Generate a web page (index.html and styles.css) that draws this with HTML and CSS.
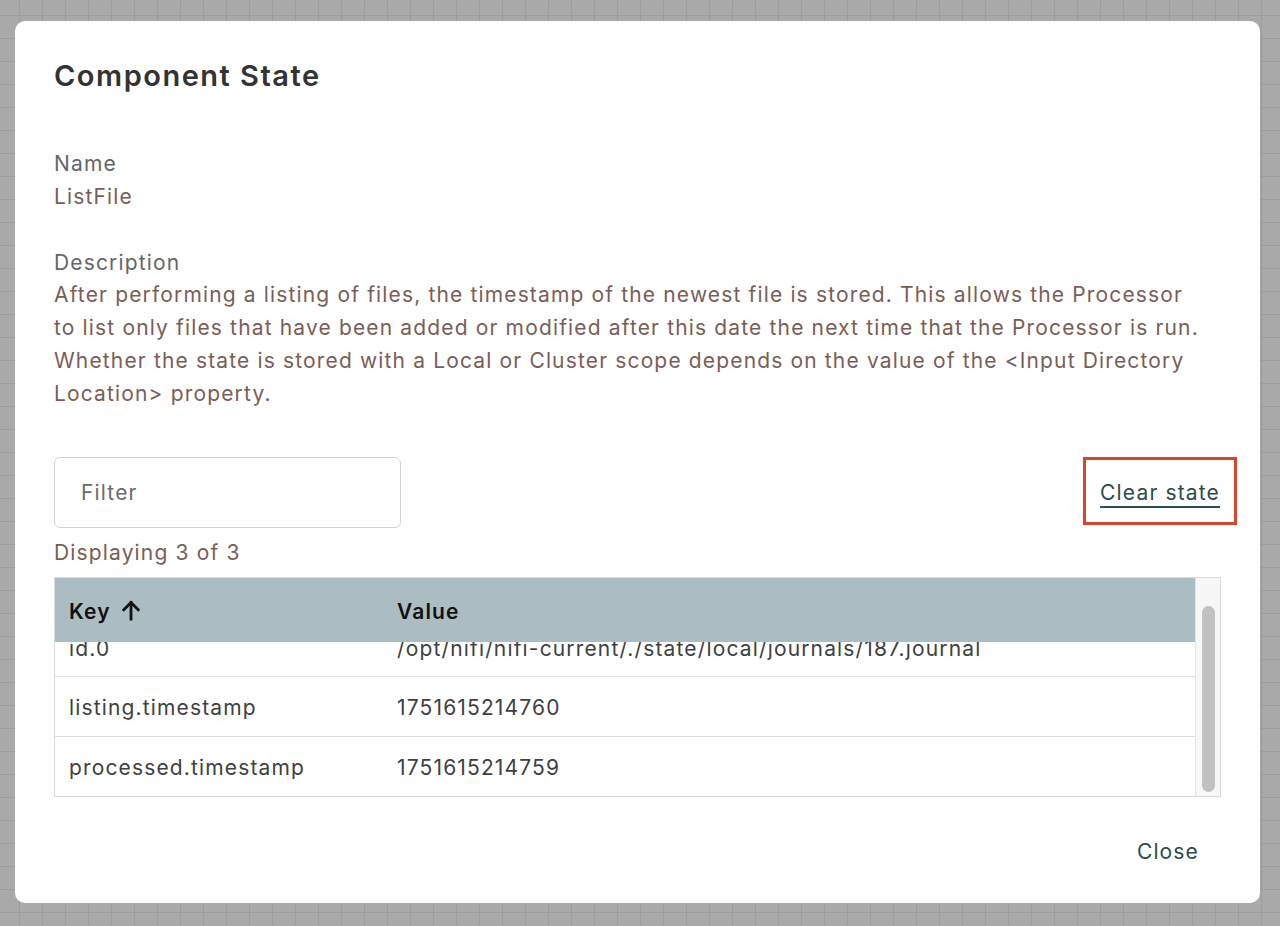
FILE: index.html
```html
<!DOCTYPE html>
<html>
<head>
<meta charset="utf-8">
<link rel="stylesheet" href="styles.css">
</head>
<body>
<div class="backdrop">
  <div class="dialog">
    <h1 class="title">Component State</h1>
    <div class="field">
      <div class="label">Name</div>
      <div class="value">ListFile</div>
    </div>
    <div class="field desc">
      <div class="label">Description</div>
      <div class="value">After performing a listing of files, the timestamp of the newest file is stored. This allows the Processor<br>to list only files that have been added or modified after this date the next time that the Processor is run.<br>Whether the state is stored with a Local or Cluster scope depends on the value of the &lt;Input Directory<br>Location&gt; property.</div>
    </div>
    <div class="toolbar">
      <div class="filter">Filter</div>
      <div class="clear-wrap">
        <a class="clear">Clear state</a>
        <div class="highlight"></div>
      </div>
    </div>
    <div class="count">Displaying 3 of 3</div>
    <div class="table">
      <div class="table-main">
        <div class="thead">
          <div class="col-key th">Key <svg class="arrow" viewBox="0 0 24 24" width="24" height="24"><path d="M12 21V4.5M4.8 11.7L12 4.5l7.2 7.2" fill="none" stroke="#111" stroke-width="2.8" stroke-linecap="square"/></svg></div>
          <div class="col-val th">Value</div>
        </div>
        <div class="tbody">
          <div class="rows">
            <div class="row"><div class="col-key">id.0</div><div class="col-val">/opt/nifi/nifi-current/./state/local/journals/187.journal</div></div>
            <div class="row"><div class="col-key">listing.timestamp</div><div class="col-val">1751615214760</div></div>
            <div class="row last"><div class="col-key">processed.timestamp</div><div class="col-val">1751615214759</div></div>
          </div>
        </div>
      </div>
      <div class="scrollbar"><div class="thumb"></div></div>
    </div>
    <div class="actions"><a class="close">Close</a></div>
  </div>
</div>
</body>
</html>
```
FILE: styles.css
```css
html, body {
  margin: 0;
  padding: 0;
  height: 100%;
}
body {
  font-family: Inter, "Noto Sans", sans-serif;
  font-size: 21px;
  letter-spacing: 1.15px;
  background-color: #a9a9a9;
  background-image:
    linear-gradient(to right, #9c9c9c 1px, transparent 1px),
    linear-gradient(to bottom, #9c9c9c 1px, transparent 1px);
  background-size: 23px 23px;
  background-position: 19px 15px;
}
.backdrop {
  padding: 21px 20px 0 15px;
}
.dialog {
  width: 1245px;
  height: 882px;
  box-sizing: border-box;
  background: #fff;
  border-radius: 10px;
  padding: 0 39px;
  display: flex;
  flex-direction: column;
}
.title {
  margin: 37px 0 0;
  font-size: 29px;
  line-height: 36px;
  font-weight: 600;
  color: #333;
  letter-spacing: 1.5px;
}
.field {
  margin-top: 54px;
  line-height: 32.8px;
}
.field.desc {
  margin-top: 33px;
}
.desc .value {
  white-space: nowrap;
}
.label {
  color: #666;
}
.value {
  color: #7b5d56;
}
.toolbar {
  margin-top: 46px;
  display: flex;
  justify-content: space-between;
  align-items: center;
}
.filter {
  width: 347px;
  height: 71px;
  box-sizing: border-box;
  border: 1.5px solid #d3d3d3;
  border-radius: 6px;
  padding-left: 26px;
  display: flex;
  align-items: center;
  color: #6b6b6b;
}
.clear-wrap {
  position: relative;
  padding-right: 1px;
}
.clear {
  display: block;
  line-height: 25px;
  color: #2a4d49;
  text-decoration: underline;
  text-underline-offset: 6px;
  text-decoration-thickness: 1.5px;
}
.highlight {
  position: absolute;
  left: -17px;
  top: -23px;
  width: 154px;
  height: 68px;
  box-sizing: border-box;
  border: 3px solid #d9452b;
}
.count {
  margin-top: 12px;
  line-height: 26px;
  color: #7b5d56;
}
.table {
  margin-top: 11px;
  height: 220px;
  box-sizing: border-box;
  border: 1.5px solid #dcdcdc;
  display: flex;
}
.table-main {
  flex: 1;
  display: flex;
  flex-direction: column;
  min-width: 0;
}
.thead {
  height: 64px;
  flex: none;
  background: #acbcc3;
  display: flex;
  align-items: center;
  padding-top: 3px;
  box-sizing: border-box;
  font-weight: 600;
  color: #111;
}
.th {
  display: flex;
  align-items: center;
}
.arrow {
  margin-left: 8px;
  margin-top: -3px;
}
.col-key {
  width: 328px;
  padding-left: 14px;
  flex: none;
}
.col-val {
  flex: 1;
}
.tbody {
  flex: 1;
  overflow: hidden;
}
.rows {
  margin-top: -24px;
}
.row {
  height: 59.5px;
  box-sizing: border-box;
  border-bottom: 1.5px solid #e0e0e0;
  display: flex;
  align-items: center;
  padding-top: 3px;
  color: #404040;
}
.row.last {
  border-bottom: none;
}
.scrollbar {
  width: 25px;
  flex: none;
  background: #f7f7f7;
  border-left: 1px solid #e4e4e4;
  padding: 28px 5px 4px 6px;
  box-sizing: border-box;
}
.thumb {
  height: 100%;
  background: #c1c1c1;
  border-radius: 7px;
}
.actions {
  display: flex;
  justify-content: flex-end;
  margin-top: 42px;
  padding-right: 22px;
}
.close {
  color: #2a4d49;
}
```
